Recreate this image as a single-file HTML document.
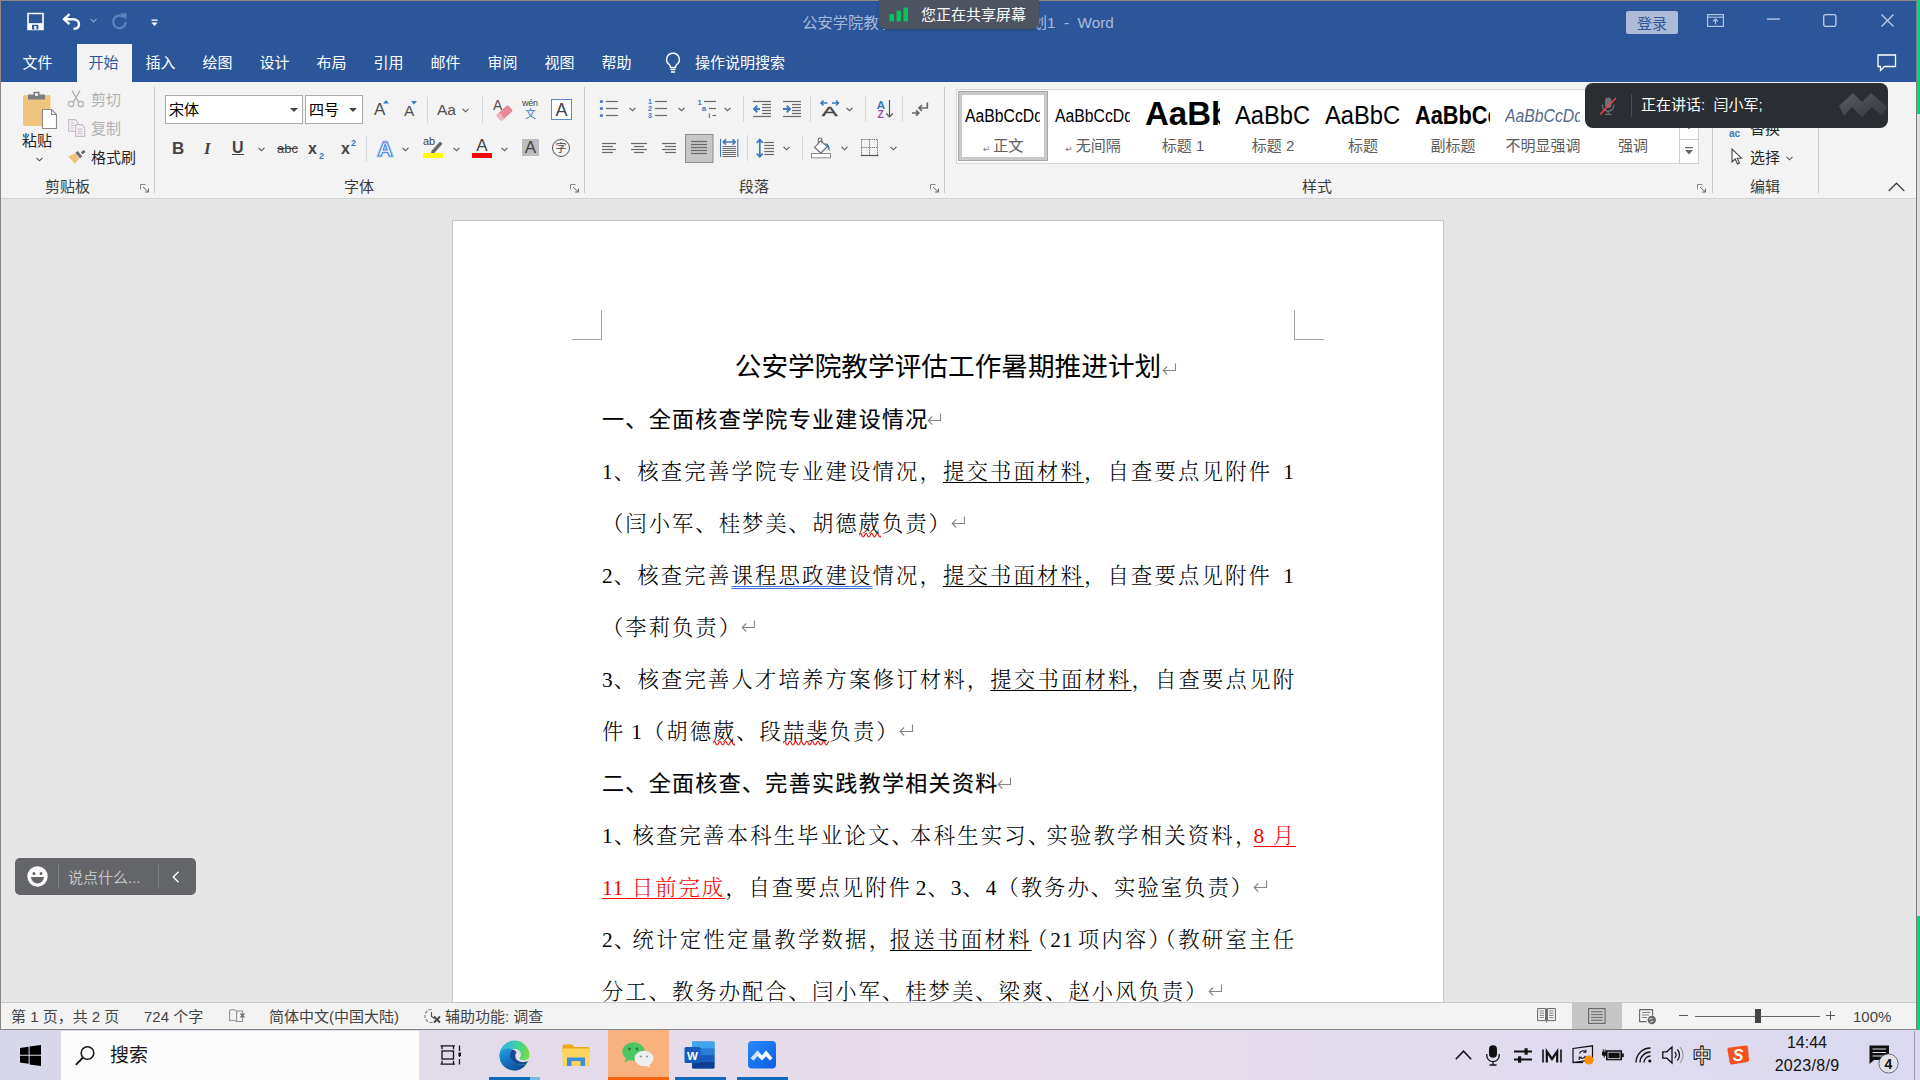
<!DOCTYPE html>
<html lang="zh-CN">
<head>
<meta charset="utf-8">
<title>Word</title>
<style>
*{box-sizing:border-box;margin:0;padding:0}
html,body{width:1920px;height:1080px;overflow:hidden;background:#e6e6e6}
body{position:relative;font-family:"Liberation Sans","Noto Sans CJK SC",sans-serif;font-size:15px;color:#262626}
.abs,.abs-all *{position:absolute}
#win{position:absolute;left:0;top:0;width:1917px;height:1030px;background:#e6e6e6;overflow:hidden}
#titlebar{position:absolute;left:0;top:0;width:1917px;height:82px;background:#2b579a}
#ribbon{position:absolute;left:0;top:82px;width:1917px;height:117px;background:#f3f3f3;border-bottom:1px solid #d2d2d2}
#docarea{position:absolute;left:0;top:199px;width:1917px;height:803px;background:#e6e6e6;overflow:hidden}
#status{position:absolute;left:0;top:1002px;width:1917px;height:28px;background:#f3f3f3;color:#444}
#taskbar{position:absolute;left:0;top:1030px;width:1920px;height:50px;background:linear-gradient(90deg,#d6d7e9 0%,#e2dbea 22%,#e9dcea 50%,#e3dcee 72%,#dad9f0 100%)}
#tbi{position:absolute;left:0;top:1px;width:1920px;height:49px}
.t{position:absolute;white-space:nowrap;line-height:20px;height:20px}
</style>
</head>
<body>
<div id="win">
<div id="titlebar"><style>
#titlebar .tab{position:absolute;top:44px;height:38px;line-height:38px;padding-right:2px;width:57px;text-align:center;color:#fff;font-size:15px}
#titlebar .tab.on{background:#f3f3f3;color:#2b579a;width:55px}
#titlebar svg{position:absolute;overflow:visible}
</style>
<!-- quick access -->
<svg style="left:27px;top:13px" width="17" height="17" viewBox="0 0 17 17"><path d="M1 0.5h15v16h-15z" fill="none" stroke="#fff" stroke-width="1.6"/><rect x="1" y="10.2" width="15" height="6" fill="#fff"/><rect x="5" y="11.8" width="6.4" height="4.7" fill="#2b579a"/><rect x="7.2" y="13" width="2.2" height="3.5" fill="#fff"/></svg>
<svg style="left:62px;top:13px" width="19" height="17" viewBox="0 0 19 17"><path d="M7.5 1.2L2 6.2l5.5 5" fill="none" stroke="#fff" stroke-width="2.4"/><path d="M2.5 6.2h8.5c3.6 0 6 2 6 5s-2.4 4.6-5.5 4.6" fill="none" stroke="#fff" stroke-width="2.4"/></svg>
<svg style="left:90px;top:18px" width="7" height="5" viewBox="0 0 7 5"><path d="M0.5 0.8l3 3 3-3" fill="none" stroke="#8ea6d0" stroke-width="1.2"/></svg>
<svg style="left:111px;top:13px" width="17" height="17" viewBox="0 0 17 17"><path d="M12.800 4.300A6.300 6.300 0 1 0 14.800 9" fill="none" stroke="#5f83bd" stroke-width="2.300"/><path d="M9 0.300h6.500v6.500z" fill="#5f83bd"/></svg>
<svg style="left:151px;top:19px" width="7" height="8" viewBox="0 0 7 8"><rect x="0.5" y="0.5" width="6" height="1.3" fill="#fff"/><path d="M0.3 3.6h6.4L3.5 7z" fill="#fff"/></svg>
<!-- title -->
<div class="t" style="left:658px;width:600px;top:13px;text-align:center;color:#a9b9d8;font-size:15.3px">公安学院教学评估工作暑期推进计划1&nbsp; -&nbsp; Word</div>
<!-- right buttons -->
<div style="position:absolute;left:1626px;top:11px;width:52px;height:23px;background:#acbbd8;border-radius:2px;color:#2b579a;font-size:15px;line-height:25px;text-align:center">登录</div>
<svg style="left:1707px;top:14px" width="17" height="13" viewBox="0 0 17 13"><rect x="0.6" y="0.6" width="15.8" height="11.8" fill="none" stroke="#b4c3de" stroke-width="1.2"/><path d="M0.6 3.2h15.8" stroke="#b4c3de" stroke-width="1.1"/><path d="M8.5 10.5v-5M6 7.5l2.5-2.5 2.5 2.5" fill="none" stroke="#b4c3de" stroke-width="1.2"/></svg>
<svg style="left:1767px;top:18px" width="13" height="2" viewBox="0 0 13 2"><rect width="13" height="1.3" y="0.4" fill="#c3cfe4"/></svg>
<svg style="left:1823px;top:14px" width="14" height="13" viewBox="0 0 14 13"><rect x="0.7" y="0.7" width="12.2" height="11.6" rx="1.8" fill="none" stroke="#c3cfe4" stroke-width="1.3"/></svg>
<svg style="left:1881px;top:14px" width="13" height="13" viewBox="0 0 13 13"><path d="M0.5 0.5l12 12M12.5 0.5l-12 12" stroke="#c3cfe4" stroke-width="1.3"/></svg>
<svg style="left:1877px;top:54px" width="20" height="18" viewBox="0 0 20 18"><path d="M1 1h17.5v11.5h-11l-4 4v-4h-2.5z" fill="none" stroke="#fff" stroke-width="1.3"/></svg>
<!-- tabs -->
<div class="tab" style="left:10px">文件</div>
<div class="tab on" style="left:77px">开始</div>
<div class="tab" style="left:133px">插入</div>
<div class="tab" style="left:190px">绘图</div>
<div class="tab" style="left:247px">设计</div>
<div class="tab" style="left:304px">布局</div>
<div class="tab" style="left:361px">引用</div>
<div class="tab" style="left:418px">邮件</div>
<div class="tab" style="left:475px">审阅</div>
<div class="tab" style="left:532px">视图</div>
<div class="tab" style="left:589px">帮助</div>
<svg style="left:665px;top:52px" width="16" height="22" viewBox="0 0 16 22"><path d="M8 1.2a6.3 6.3 0 0 0-3.6 11.5c0.9 0.8 1.1 1.6 1.1 2.8h5c0-1.2 0.2-2 1.1-2.8A6.3 6.3 0 0 0 8 1.2z" fill="none" stroke="#fff" stroke-width="1.4"/><path d="M5.5 17.5h5M6 20h4" stroke="#fff" stroke-width="1.4"/></svg>
<div class="t" style="left:695px;top:53px;color:#fff;font-size:15px">操作说明搜索</div>
<div style="position:absolute;left:0;top:0;width:1917px;height:1px;background:#8b8782"></div>
</div>
<div id="ribbon"><style>
#ribbon svg{position:absolute;overflow:visible}
#ribbon .t{color:#262626;font-size:15px;margin-top:1px}
#ribbon .gl{position:absolute;top:95px;height:20px;line-height:20px;font-size:15px;color:#3b3b3b;white-space:nowrap;transform:translateX(-50%)}
#ribbon .gs{position:absolute;top:5px;width:1px;height:106px;background:#c8c8c8}
#ribbon .ss{position:absolute;width:1px;height:26px;background:#d4d4d4}
#ribbon .dis{color:#b1b1b1}
.cv{position:absolute;width:7px;height:4px}
</style>
<!-- ===== Clipboard ===== -->
<svg style="left:22px;top:8px" width="36" height="40" viewBox="0 0 36 40">
<rect x="1" y="5" width="27.5" height="31" rx="1.5" fill="#edc57f"/>
<path d="M6 9.5v-5h5.5v-2.8h6v2.8h5.5v5z" fill="#7c7c7c"/><rect x="13" y="3.2" width="3" height="2.6" fill="#f3f3f3"/>
<path d="M20.5 19.5h9l5 5v14h-14z" fill="#fff" stroke="#8a8a8a" stroke-width="1.1"/><path d="M29.5 19.5v5h5" fill="none" stroke="#8a8a8a" stroke-width="1.1"/>
</svg>
<div class="t" style="left:7px;width:60px;text-align:center;top:48px">粘贴</div>
<svg style="left:36px;top:75px" width="7" height="5" viewBox="0 0 7 5"><path d="M0.5 0.8l3 3 3-3" fill="none" stroke="#555" stroke-width="1.1"/></svg>
<svg style="left:67px;top:8px" width="18" height="18" viewBox="0 0 18 18"><path d="M5 0.5l6.5 11.5M13 0.5L6.5 12" stroke="#b3b3b3" stroke-width="1.5" fill="none"/><circle cx="4" cy="14" r="2.7" fill="none" stroke="#b3b3b3" stroke-width="1.3"/><circle cx="13.8" cy="14" r="2.7" fill="none" stroke="#b3b3b3" stroke-width="1.3"/></svg>
<div class="t dis" style="left:91px;top:7px">剪切</div>
<svg style="left:68px;top:37px" width="18" height="18" viewBox="0 0 18 18"><path d="M0.6 0.6h6.5l3 3v8.5h-9.5z" fill="#f6f0f6" stroke="#c9bcc9" stroke-width="1.1"/><path d="M2.5 4h4M2.5 6.5h4M2.5 9h3" stroke="#c9bcc9" stroke-width="1"/><path d="M7.6 5.6h6l3 3v8.8h-9z" fill="#f6f0f6" stroke="#c9bcc9" stroke-width="1.1"/><path d="M9.5 10h5M9.5 12.3h5M9.5 14.6h5" stroke="#c9bcc9" stroke-width="1"/></svg>
<div class="t dis" style="left:91px;top:36px">复制</div>
<svg style="left:68px;top:67px" width="18" height="16" viewBox="0 0 18 16"><path d="M0.3 7.5L7 4.2l4.2 5L7 15z" fill="#edc57f"/><path d="M7.3 3.7l2.5-1.8 4.6 5.6-2.5 1.8z" fill="#6d6d6d"/><path d="M12.8 3.2l3-2.4 1.8 2.2-3 2.4z" fill="#6d6d6d"/></svg>
<div class="t" style="left:91px;top:65px">格式刷</div>
<div class="gl" style="left:67.5px">剪贴板</div>
<svg class="dl" style="left:140px;top:102px" width="10" height="9" viewBox="0 0 10 9"><path d="M0.500 5.500V0.500H5.500" fill="none" stroke="#8a8a8a" stroke-width="1"/><path d="M3 3l5.500 5M8.500 4.500v3.500H5" fill="none" stroke="#6a6a6a" stroke-width="1"/></svg>
<div class="gs" style="left:154px"></div>
<!-- ===== Font group ===== -->
<div style="position:absolute;left:165px;top:13px;width:138px;height:29px;background:#fff;border:1px solid #ababab"></div>
<div class="t" style="left:169px;top:17px;font-size:15px;color:#000">宋体</div>
<svg style="left:290px;top:26px" width="8" height="4" viewBox="0 0 8 4"><path d="M0 0h8L4 4z" fill="#444"/></svg>
<div style="position:absolute;left:305px;top:13px;width:58px;height:29px;background:#fff;border:1px solid #ababab"></div>
<div class="t" style="left:309px;top:17px;font-size:15px;color:#000">四号</div>
<svg style="left:349px;top:26px" width="8" height="4" viewBox="0 0 8 4"><path d="M0 0h8L4 4z" fill="#444"/></svg>
<!-- grow/shrink -->
<div class="t" style="left:374px;top:17px;font-size:17px;color:#505050">A</div>
<svg style="left:383px;top:18px" width="6" height="4" viewBox="0 0 6 4"><path d="M0 3.5L3 0l3 3.5z" fill="#3e78c8"/></svg>
<div class="t" style="left:404px;top:18px;font-size:15.5px;color:#505050">A</div>
<svg style="left:411px;top:19px" width="6" height="4" viewBox="0 0 6 4"><path d="M0 0h6L3 3.5z" fill="#3e78c8"/></svg>
<div class="ss" style="left:427px;top:15px"></div>
<div class="t" style="left:437px;top:17px;font-size:15.5px;color:#505050">Aa</div>
<svg style="left:462px;top:26px" width="7" height="5" viewBox="0 0 7 5"><path d="M0.5 0.8l3 3 3-3" fill="none" stroke="#555" stroke-width="1.1"/></svg>
<div class="ss" style="left:482px;top:15px"></div>
<!-- clear formatting -->
<div class="t" style="left:493px;top:12px;font-size:14px;color:#505050">A</div>
<svg style="left:496px;top:23px" width="17" height="16" viewBox="0 0 17 16"><g transform="rotate(-42 8.500 8)"><rect x="0.500" y="4" width="16" height="8" rx="2" fill="#e8879a"/><rect x="0.500" y="4" width="4.500" height="8" rx="2" fill="#f2b3bf"/></g></svg>
<!-- wen -->
<div class="t" style="left:522px;top:14px;font-size:9px;line-height:12px;height:12px;color:#444;letter-spacing:-0.2px">wén</div>
<div class="t" style="left:525px;top:23px;font-size:11px;line-height:16px;height:16px;color:#3e78c8">文</div>
<!-- A box -->
<div style="position:absolute;left:551px;top:17px;width:21px;height:21px;border:1px solid #5b8bd0;background:#fff"></div>
<div class="t" style="left:551px;width:21px;text-align:center;top:17px;font-size:18px;color:#444">A</div>
<!-- row 2 -->
<div class="t" style="left:172px;top:56px;font-size:17px;font-weight:700;color:#444">B</div>
<div class="t" style="left:204px;top:56px;font-size:17px;font-style:italic;font-weight:700;color:#444;font-family:'Liberation Serif',serif">I</div>
<div class="t" style="left:232px;top:55px;font-size:16px;color:#444;font-weight:700">U</div>
<div style="position:absolute;left:232px;top:72px;width:12px;height:1px;background:#444"></div>
<svg style="left:258px;top:65px" width="7" height="5" viewBox="0 0 7 5"><path d="M0.5 0.8l3 3 3-3" fill="none" stroke="#555" stroke-width="1.1"/></svg>
<div class="t" style="left:277px;top:56px;font-size:13px;color:#444;text-decoration:line-through">abc</div>
<div class="t" style="left:308px;top:56px;font-size:16px;color:#444;font-weight:700">x</div>
<div class="t" style="left:319px;top:63px;font-size:9px;color:#3e78c8;font-weight:700">2</div>
<div class="t" style="left:341px;top:56px;font-size:16px;color:#444;font-weight:700">x</div>
<div class="t" style="left:351px;top:50px;font-size:9px;color:#3e78c8;font-weight:700">2</div>
<div class="ss" style="left:366px;top:54px"></div>
<!-- text effects -->
<svg style="left:375px;top:56px" width="20" height="20" viewBox="0 0 20 20"><text x="10" y="17.500" text-anchor="middle" font-family="Liberation Sans, sans-serif" font-size="21" font-weight="700" fill="none" stroke="#c2daf6" stroke-width="3">A</text><text x="10" y="17.500" text-anchor="middle" font-family="Liberation Sans, sans-serif" font-size="21" font-weight="700" fill="#fff" stroke="#4a86d8" stroke-width="1.100">A</text></svg>
<svg style="left:402px;top:65px" width="7" height="5" viewBox="0 0 7 5"><path d="M0.5 0.8l3 3 3-3" fill="none" stroke="#555" stroke-width="1.1"/></svg>
<!-- highlighter -->
<div class="t" style="left:423px;top:52px;font-size:11px;line-height:12px;height:12px;color:#444">ab</div>
<svg style="left:427px;top:59px" width="16" height="14" viewBox="0 0 16 14"><path d="M13 0.5l2.5 2.2-8.5 9.5-3.2 0.8 0.7-3z" fill="#666"/></svg>
<div style="position:absolute;left:423px;top:71px;width:20px;height:5px;background:#ffff00"></div>
<svg style="left:453px;top:65px" width="7" height="5" viewBox="0 0 7 5"><path d="M0.5 0.8l3 3 3-3" fill="none" stroke="#555" stroke-width="1.1"/></svg>
<!-- font color -->
<div class="t" style="left:472px;width:20px;text-align:center;top:53px;font-size:17px;color:#444">A</div>
<div style="position:absolute;left:472px;top:71px;width:20px;height:5px;background:#ff0000"></div>
<svg style="left:501px;top:65px" width="7" height="5" viewBox="0 0 7 5"><path d="M0.5 0.8l3 3 3-3" fill="none" stroke="#555" stroke-width="1.1"/></svg>
<!-- char shading -->
<div style="position:absolute;left:522px;top:57px;width:17px;height:17px;background:#bdbdbd"></div>
<div class="t" style="left:522px;width:17px;text-align:center;top:55px;font-size:17px;color:#444">A</div>
<!-- enclosed char -->
<div style="position:absolute;left:552px;top:57px;width:18px;height:18px;border:1px solid #555;border-radius:50%"></div>
<div class="t" style="left:552px;width:18px;text-align:center;top:55px;font-size:11px;color:#444">字</div>
<div class="gl" style="left:359px">字体</div>
<svg class="dl" style="left:570px;top:102px" width="10" height="9" viewBox="0 0 10 9"><path d="M0.500 5.500V0.500H5.500" fill="none" stroke="#8a8a8a" stroke-width="1"/><path d="M3 3l5.500 5M8.500 4.500v3.500H5" fill="none" stroke="#6a6a6a" stroke-width="1"/></svg>
<div class="gs" style="left:584px"></div>

<!-- ===== Paragraph group ===== -->
<svg style="left:584px;top:0" width="361" height="117" viewBox="584 82 361 117">
<circle cx="601.4" cy="101.5" r="1.6" fill="#3e78c0"/>
<path d="M606 101.5H618" stroke="#6a6a6a" stroke-width="1.2"/>
<circle cx="601.4" cy="108.5" r="1.6" fill="#3e78c0"/>
<path d="M606 108.5H618" stroke="#6a6a6a" stroke-width="1.2"/>
<circle cx="601.4" cy="115.5" r="1.6" fill="#3e78c0"/>
<path d="M606 115.5H618" stroke="#6a6a6a" stroke-width="1.2"/>
<text x="650" y="104.1" font-family="Liberation Sans,sans-serif" font-weight="700" font-size="7" fill="#3e78c0" text-anchor="middle">1</text>
<path d="M655 101.5H667" stroke="#6a6a6a" stroke-width="1.2"/>
<text x="650" y="111.1" font-family="Liberation Sans,sans-serif" font-weight="700" font-size="7" fill="#3e78c0" text-anchor="middle">2</text>
<path d="M655 108.5H667" stroke="#6a6a6a" stroke-width="1.2"/>
<text x="650" y="118.1" font-family="Liberation Sans,sans-serif" font-weight="700" font-size="7" fill="#3e78c0" text-anchor="middle">3</text>
<path d="M655 115.5H667" stroke="#6a6a6a" stroke-width="1.2"/>
<text x="699.5" y="105" font-family="Liberation Sans,sans-serif" font-weight="700" font-size="7.5" fill="#3e78c0" text-anchor="middle">1</text>
<path d="M704 101.5H716" stroke="#6a6a6a" stroke-width="1.2"/>
<text x="704" y="111.2" font-family="Liberation Sans,sans-serif" font-weight="700" font-size="8" fill="#3e78c0" text-anchor="middle">a</text>
<path d="M709 108.5H716" stroke="#6a6a6a" stroke-width="1.2"/>
<text x="709.3" y="117.6" font-family="Liberation Sans,sans-serif" font-weight="700" font-size="7.5" fill="#3e78c0" text-anchor="middle">i</text>
<path d="M712.5 115.5H716" stroke="#6a6a6a" stroke-width="1.2"/>
<path d="M753 101.5H771" stroke="#6a6a6a" stroke-width="1.2"/>
<path d="M762 104.5H771" stroke="#6a6a6a" stroke-width="1.2"/>
<path d="M762 107.5H771" stroke="#6a6a6a" stroke-width="1.2"/>
<path d="M762 110.5H771" stroke="#6a6a6a" stroke-width="1.2"/>
<path d="M762 113.5H771" stroke="#6a6a6a" stroke-width="1.2"/>
<path d="M753 116.5H771" stroke="#6a6a6a" stroke-width="1.2"/>
<path d="M760 109H754.5M757.3 105.8L754 109l3.3 3.2" fill="none" stroke="#3e78c0" stroke-width="1.9"/>
<path d="M783 101.5H801" stroke="#6a6a6a" stroke-width="1.2"/>
<path d="M792 104.5H801" stroke="#6a6a6a" stroke-width="1.2"/>
<path d="M792 107.5H801" stroke="#6a6a6a" stroke-width="1.2"/>
<path d="M792 110.5H801" stroke="#6a6a6a" stroke-width="1.2"/>
<path d="M792 113.5H801" stroke="#6a6a6a" stroke-width="1.2"/>
<path d="M783 116.5H801" stroke="#6a6a6a" stroke-width="1.2"/>
<path d="M783 109H789.5M786.7 105.8L790 109l-3.3 3.2" fill="none" stroke="#3e78c0" stroke-width="1.9"/>
<path d="M821 103h6.5M823.5 100.5L821 103l2.5 2.5M838.5 103H832M836 100.5l2.5 2.5-2.5 2.5" fill="none" stroke="#3e78c0" stroke-width="1.5"/>
<text x="829.6" y="116" font-family="Liberation Sans,sans-serif" font-size="13.5" fill="#444" stroke="#444" stroke-width="0.35" text-anchor="middle" transform="translate(829.6 0) scale(1.75 1) translate(-829.6 0)">A</text>
<text x="880.8" y="108.6" font-family="Liberation Sans,sans-serif" font-size="11.5" font-weight="700" fill="#3e78c0" text-anchor="middle">A</text>
<text x="880.6" y="118" font-family="Liberation Sans,sans-serif" font-size="10.5" font-weight="700" fill="#9a4fb0" text-anchor="middle">Z</text>
<path d="M889.5 100v17M886.2 113.5l3.3 3.5 3.3-3.5" fill="none" stroke="#555" stroke-width="1.2"/>
<path d="M927.3 102.5v5.5h-8M922 105l-3 3 3 3" fill="none" stroke="#666" stroke-width="1.7"/>
<path d="M912 113h6.5M916 110.3l2.8 2.7-2.8 2.7" fill="none" stroke="#666" stroke-width="1.7"/>
<path d="M602 143.5H616" stroke="#6a6a6a" stroke-width="1.2"/>
<path d="M631 143.5H647" stroke="#6a6a6a" stroke-width="1.2"/>
<path d="M662 143.5H676" stroke="#6a6a6a" stroke-width="1.2"/>
<path d="M602 146.5H613" stroke="#6a6a6a" stroke-width="1.2"/>
<path d="M634 146.5H644" stroke="#6a6a6a" stroke-width="1.2"/>
<path d="M665 146.5H676" stroke="#6a6a6a" stroke-width="1.2"/>
<path d="M602 149.5H616" stroke="#6a6a6a" stroke-width="1.2"/>
<path d="M631 149.5H647" stroke="#6a6a6a" stroke-width="1.2"/>
<path d="M662 149.5H676" stroke="#6a6a6a" stroke-width="1.2"/>
<path d="M602 152.5H613" stroke="#6a6a6a" stroke-width="1.2"/>
<path d="M634 152.5H644" stroke="#6a6a6a" stroke-width="1.2"/>
<path d="M665 152.5H676" stroke="#6a6a6a" stroke-width="1.2"/>
<rect x="685.5" y="134.5" width="27.5" height="28" fill="#c6c6c6" stroke="#8e8e8e" stroke-width="1"/>
<path d="M691 141.5H707" stroke="#6a6a6a" stroke-width="1.2"/>
<path d="M691 144.5H707" stroke="#6a6a6a" stroke-width="1.2"/>
<path d="M691 147.5H707" stroke="#6a6a6a" stroke-width="1.2"/>
<path d="M691 150.5H707" stroke="#6a6a6a" stroke-width="1.2"/>
<path d="M691 153.5H707" stroke="#6a6a6a" stroke-width="1.2"/>
<path d="M720.5 139v18M737.8 139v18" stroke="#3e78c0" stroke-width="1.1"/>
<path d="M723.5 142h11.5M726 139.3l-2.8 2.7 2.8 2.7M732.5 139.3l2.8 2.7-2.8 2.7" fill="none" stroke="#3e78c0" stroke-width="1.6"/>
<path d="M722.5 146.5H736" stroke="#6a6a6a" stroke-width="1.05"/>
<path d="M722.5 148.5H736" stroke="#6a6a6a" stroke-width="1.05"/>
<path d="M722.5 150.5H736" stroke="#6a6a6a" stroke-width="1.05"/>
<path d="M722.5 152.5H736" stroke="#6a6a6a" stroke-width="1.05"/>
<path d="M722.5 154.5H736" stroke="#6a6a6a" stroke-width="1.05"/>
<path d="M722.5 156.5H736" stroke="#6a6a6a" stroke-width="1.05"/>
<path d="M759.8 140v16.5M756.8 142.8l3-3.2 3 3.2M756.8 153.6l3 3.2 3-3.2" fill="none" stroke="#3e78c0" stroke-width="1.7"/>
<path d="M764.3 142.5H774" stroke="#6a6a6a" stroke-width="1.2"/>
<path d="M764.3 145.5H774" stroke="#6a6a6a" stroke-width="1.2"/>
<path d="M764.3 148.5H774" stroke="#6a6a6a" stroke-width="1.2"/>
<path d="M764.3 151.5H774" stroke="#6a6a6a" stroke-width="1.2"/>
<path d="M764.3 154.5H774" stroke="#6a6a6a" stroke-width="1.2"/>
<rect x="811.5" y="153.5" width="19" height="4.3" fill="#fff" stroke="#8a8a8a" stroke-width="1"/>
<path d="M814.5 147.5l6.3-6.8 6.4 6-6.3 6.3z" fill="#fff" stroke="#666" stroke-width="1.1"/>
<path d="M818.3 143v-3.2a1.8 1.8 0 0 1 3.6 0v3.8" fill="none" stroke="#666" stroke-width="1.1"/>
<path d="M825 143.2c3 0 5.2 2.5 4.6 8.3-1.2-2.5-2-3.5-2.4-4.8z" fill="#3e78c0"/>
<path d="M861.5 139.5h16.5M861.5 147.5h16.5M861.5 139.5v16M869.5 139.5v16M877.5 139.5v16" fill="none" stroke="#555" stroke-width="1" stroke-dasharray="1 1.05"/>
<path d="M861 155.5h17.5" stroke="#555" stroke-width="1.2"/>
</svg>
<svg style="left:629px;top:25px" width="7" height="5" viewBox="0 0 7 5"><path d="M0.5 0.8l3 3 3-3" fill="none" stroke="#555" stroke-width="1.1"/></svg>
<svg style="left:678px;top:25px" width="7" height="5" viewBox="0 0 7 5"><path d="M0.5 0.8l3 3 3-3" fill="none" stroke="#555" stroke-width="1.1"/></svg>
<svg style="left:724px;top:25px" width="7" height="5" viewBox="0 0 7 5"><path d="M0.5 0.8l3 3 3-3" fill="none" stroke="#555" stroke-width="1.1"/></svg>
<svg style="left:846px;top:25px" width="7" height="5" viewBox="0 0 7 5"><path d="M0.5 0.8l3 3 3-3" fill="none" stroke="#555" stroke-width="1.1"/></svg>
<svg style="left:783px;top:64px" width="7" height="5" viewBox="0 0 7 5"><path d="M0.5 0.8l3 3 3-3" fill="none" stroke="#555" stroke-width="1.1"/></svg>
<svg style="left:841px;top:64px" width="7" height="5" viewBox="0 0 7 5"><path d="M0.5 0.8l3 3 3-3" fill="none" stroke="#555" stroke-width="1.1"/></svg>
<svg style="left:890px;top:64px" width="7" height="5" viewBox="0 0 7 5"><path d="M0.5 0.8l3 3 3-3" fill="none" stroke="#555" stroke-width="1.1"/></svg>
<div class="ss" style="left:743px;top:14px"></div>
<div class="ss" style="left:810px;top:14px"></div>
<div class="ss" style="left:865px;top:14px"></div>
<div class="ss" style="left:902px;top:14px"></div>
<div class="ss" style="left:747px;top:53px"></div>
<div class="ss" style="left:802px;top:53px"></div>
<div class="gl" style="left:754px">段落</div>
<svg class="dl" style="left:930px;top:102px" width="10" height="9" viewBox="0 0 10 9"><path d="M0.500 5.500V0.500H5.500" fill="none" stroke="#8a8a8a" stroke-width="1"/><path d="M3 3l5.500 5M8.500 4.500v3.500H5" fill="none" stroke="#6a6a6a" stroke-width="1"/></svg>
<div class="gs" style="left:944px"></div>

<!-- ===== Styles ===== -->
<style>
#gal{position:absolute;left:956px;top:7px;width:743px;height:75px;background:#fff;border:1px solid #d6d6d6}
#gal .it{position:absolute;top:0;width:90px;height:73px}
#gal .pv{position:absolute;left:7px;width:75px;height:44px;top:3px;overflow:hidden;white-space:nowrap;color:#000;font-family:"Liberation Sans",sans-serif}
#gal .pv span{position:absolute;left:0;bottom:9px;line-height:1;transform-origin:0 100%}
#gal .lb{position:absolute;left:0;width:90px;top:46px;height:20px;line-height:20px;text-align:center;font-size:15px;color:#5c5c5c;white-space:nowrap}
#gal .pmk{font-family:"DejaVu Sans",sans-serif;font-size:9px;color:#777;margin-right:3px;position:relative;top:1px}
</style>
<div id="gal">
<div style="position:absolute;left:1px;top:1px;width:90px;height:70px;border:1px solid #a8a8a8;box-shadow:inset 0 0 0 3px #c9c9c9"></div>
<div class="it" style="left:1px"><div class="pv"><span style="font-size:17.5px;transform:scaleX(.9);bottom:12px">AaBbCcDd</span></div><div class="lb"><span class="pmk">↵</span>正文</div></div>
<div class="it" style="left:91px"><div class="pv"><span style="font-size:17.5px;transform:scaleX(.9);bottom:12px">AaBbCcDd</span></div><div class="lb"><span class="pmk">↵</span>无间隔</div></div>
<div class="it" style="left:181px"><div class="pv"><span style="font-size:33px;font-weight:700;transform:scaleX(1);bottom:7px">AaBb</span></div><div class="lb">标题 1</div></div>
<div class="it" style="left:271px"><div class="pv"><span style="font-size:25.5px;transform:scaleX(.93);bottom:9px">AaBbCc</span></div><div class="lb">标题 2</div></div>
<div class="it" style="left:361px"><div class="pv"><span style="font-size:25.5px;transform:scaleX(.93);bottom:9px">AaBbCc</span></div><div class="lb">标题</div></div>
<div class="it" style="left:451px"><div class="pv"><span style="font-size:25px;font-weight:700;transform:scaleX(.87);bottom:9px">AaBbCc</span></div><div class="lb">副标题</div></div>
<div class="it" style="left:541px"><div class="pv"><span style="font-size:17.5px;font-style:italic;color:#5a6a88;transform:scaleX(.9);bottom:12px">AaBbCcDd</span></div><div class="lb">不明显强调</div></div>
<div class="it" style="left:631px"><div class="pv"><span style="font-size:17.5px;font-style:italic;color:#000;transform:scaleX(.9);bottom:12px">AaBbCcDd</span></div><div class="lb">强调</div></div>
<div style="position:absolute;left:722px;top:-1px;width:20px;height:75px;border:1px solid #d0d0d0;background:#fff"></div>
<div style="position:absolute;left:722px;top:24px;width:20px;height:1px;background:#d0d0d0"></div>
<div style="position:absolute;left:722px;top:49px;width:20px;height:1px;background:#d0d0d0"></div>
<svg style="left:728px;top:10px" width="8" height="5" viewBox="0 0 8 5"><path d="M0 5L4 0.5 8 5z" fill="#777"/></svg>
<svg style="left:728px;top:35px" width="8" height="5" viewBox="0 0 8 5"><path d="M0 0h8L4 4.5z" fill="#777"/></svg>
<svg style="left:728px;top:57px" width="8" height="8" viewBox="0 0 8 8"><path d="M0 0.6h8" stroke="#666" stroke-width="1.2"/><path d="M0 3h8L4 7.5z" fill="#666"/></svg>
</div>
<div class="gl" style="left:1317px">样式</div>
<svg class="dl" style="left:1697px;top:102px" width="10" height="9" viewBox="0 0 10 9"><path d="M0.500 5.500V0.500H5.500" fill="none" stroke="#8a8a8a" stroke-width="1"/><path d="M3 3l5.500 5M8.500 4.500v3.500H5" fill="none" stroke="#6a6a6a" stroke-width="1"/></svg>
<div class="gs" style="left:1712px"></div>

<!-- ===== Editing ===== -->
<div class="t" style="left:1750px;top:8px">查找</div>
<div class="t" style="left:1750px;top:36px">替换</div>
<div class="t" style="left:1729px;top:41px;font-size:10px;color:#3e78c0;font-weight:700">ac</div>
<svg style="left:1731px;top:66px" width="12" height="17" viewBox="0 0 12 17"><path d="M1 1v13l3.2-3 2.3 5 2-0.9-2.3-4.9H10.500z" fill="#fff" stroke="#444" stroke-width="1.1"/></svg>
<div class="t" style="left:1750px;top:65px">选择</div>
<svg style="left:1786px;top:74px" width="7" height="5" viewBox="0 0 7 5"><path d="M0.5 0.8l3 3 3-3" fill="none" stroke="#555" stroke-width="1.1"/></svg>
<div class="gl" style="left:1765px">编辑</div>
<div class="gs" style="left:1818px"></div>
<svg style="left:1888px;top:100px" width="17" height="10" viewBox="0 0 17 10"><path d="M0.7 9l7.8-7.8L16.300 9" fill="none" stroke="#444" stroke-width="1.3"/></svg>

</div>
<div id="docarea"><div id="page"><style>
#page{position:absolute;left:452px;top:21px;width:992px;height:900px;background:#fff;border:1px solid #c6c6c6}
.crop{position:absolute;border:0 solid #a6a6a6;width:30px;height:30px}
.ln{position:absolute;left:149px;width:692px;height:52px;line-height:52px;font-size:21.3px;letter-spacing:2.03px;white-space:nowrap;color:#000;font-family:"Liberation Serif","Noto Serif CJK SC",serif;font-weight:300}
.ln.j{text-align:justify;text-align-last:justify;width:694px}
.ln.b{margin-top:1px}
.ln.h{font-family:"Liberation Sans","Noto Sans CJK SC",sans-serif;font-weight:400;-webkit-text-stroke:0.15px #000;font-size:22px;letter-spacing:1.33px;margin-top:1px}
.ln.tt{font-family:"Liberation Sans","Noto Sans CJK SC",sans-serif;font-weight:400;font-size:26.67px;letter-spacing:0;text-align:center}
.pm{display:inline-block;vertical-align:middle;margin-left:-1px;position:relative;top:-4px;overflow:visible}
.h .pm{top:-2px;margin-left:-2px}
.u{text-decoration:underline;text-decoration-thickness:1px;text-underline-offset:3px}
.wv{position:relative}
.wvs{position:absolute;left:0;bottom:-2px;overflow:hidden}
.bl{text-decoration:underline double #3a6fd8;text-decoration-thickness:1px;text-underline-offset:3px;text-decoration-skip-ink:none}
.rd{color:#ff0000;text-decoration:underline;text-decoration-thickness:1px;text-underline-offset:3px}
.as{padding-left:4px}
.d{letter-spacing:1px}
.sp{display:inline-block;width:11.2px}
.pc{margin-right:-5px}
.pl{margin-left:-5px}
</style>
<div class="crop" style="left:119px;top:89px;border-right-width:1px;border-bottom-width:1px"></div>
<div class="crop" style="left:841px;top:89px;border-left-width:1px;border-bottom-width:1px"></div>
<div class="ln tt" style="top:120px">公安学院教学评估工作暑期推进计划<svg class="pm" style="position:absolute;top:22px;margin-left:1px" width="15" height="13" viewBox="0 0 15 13"><path d="M13.500 0.500v7H1.200M5.200 3.500L1.200 7.500l4 4" fill="none" stroke="#858585" stroke-width="1.100"/></svg></div>
<div class="ln h" style="top:172px">一、全面核查学院专业建设情况<svg class="pm" width="15" height="13" viewBox="0 0 15 13"><path d="M13.500 0.500v7H1.200M5.200 3.500L1.200 7.500l4 4" fill="none" stroke="#858585" stroke-width="1.100"/></svg></div>
<div class="ln b j" style="top:224px;width:693px"><span class="d">1</span>、核查完善学院专业建设情况，<span class="u">提交书面材料</span>，自查要点见附件<span class="sp"></span><span class="d">1</span></div>
<div class="ln b" style="top:276px">（闫小军、桂梦美、胡德<span class="wv">葳<svg class="wvs" width="22.3" height="6" viewBox="0 0 22.3 6"><path d="M0 3.200 q1.400 -3.600 2.800 0 q1.400 3.600 2.800 0 q1.400 -3.600 2.800 0 q1.400 3.600 2.800 0 q1.400 -3.600 2.800 0 q1.400 3.600 2.800 0 q1.400 -3.600 2.800 0 q1.400 3.600 2.800 0 q1.400 -3.600 2.800 0 q1.400 3.600 2.800 0 q1.400 -3.600 2.800 0" fill="none" stroke="#f01414" stroke-width="1.100"/></svg></span>负责）<svg class="pm" width="15" height="13" viewBox="0 0 15 13"><path d="M13.500 0.500v7H1.200M5.200 3.500L1.200 7.500l4 4" fill="none" stroke="#858585" stroke-width="1.100"/></svg></div>
<div class="ln b j" style="top:328px;width:693px"><span class="d">2</span>、核查完善<span class="bl">课程思政建设</span>情况，<span class="u">提交书面材料</span>，自查要点见附件<span class="sp"></span><span class="d">1</span></div>
<div class="ln b" style="top:380px">（李莉负责）<svg class="pm" width="15" height="13" viewBox="0 0 15 13"><path d="M13.500 0.500v7H1.200M5.200 3.500L1.200 7.500l4 4" fill="none" stroke="#858585" stroke-width="1.100"/></svg></div>
<div class="ln b j" style="top:432px"><span class="d">3</span>、核查完善人才培养方案修订材料，<span class="u">提交书面材料</span>，自查要点见附</div>
<div class="ln b" style="top:484px">件<span class="as" style="padding-left:6px"><span class="d">1</span></span>（胡德<span class="wv">葳<svg class="wvs" width="22.3" height="6" viewBox="0 0 22.3 6"><path d="M0 3.200 q1.400 -3.600 2.800 0 q1.400 3.600 2.800 0 q1.400 -3.600 2.800 0 q1.400 3.600 2.800 0 q1.400 -3.600 2.800 0 q1.400 3.600 2.800 0 q1.400 -3.600 2.800 0 q1.400 3.600 2.800 0 q1.400 -3.600 2.800 0 q1.400 3.600 2.800 0 q1.400 -3.600 2.800 0" fill="none" stroke="#f01414" stroke-width="1.100"/></svg></span>、段<span class="wv">喆斐<svg class="wvs" width="45.7" height="6" viewBox="0 0 45.7 6"><path d="M0 3.200 q1.400 -3.600 2.800 0 q1.400 3.600 2.800 0 q1.400 -3.600 2.800 0 q1.400 3.600 2.800 0 q1.400 -3.600 2.800 0 q1.400 3.600 2.800 0 q1.400 -3.600 2.800 0 q1.400 3.600 2.800 0 q1.400 -3.600 2.800 0 q1.400 3.600 2.800 0 q1.400 -3.600 2.800 0 q1.400 3.600 2.800 0 q1.400 -3.600 2.800 0 q1.400 3.600 2.800 0 q1.400 -3.600 2.800 0 q1.400 3.600 2.800 0 q1.400 -3.600 2.800 0 q1.400 3.600 2.800 0 q1.400 -3.600 2.800 0 q1.400 3.600 2.800 0 q1.400 -3.600 2.800 0 q1.400 3.600 2.800 0" fill="none" stroke="#f01414" stroke-width="1.100"/></svg></span>负责）<svg class="pm" width="15" height="13" viewBox="0 0 15 13"><path d="M13.500 0.500v7H1.200M5.200 3.500L1.200 7.500l4 4" fill="none" stroke="#858585" stroke-width="1.100"/></svg></div>
<div class="ln h" style="top:536px">二、全面核查、完善实践教学相关资料<svg class="pm" width="15" height="13" viewBox="0 0 15 13"><path d="M13.500 0.500v7H1.200M5.200 3.500L1.200 7.500l4 4" fill="none" stroke="#858585" stroke-width="1.100"/></svg></div>
<div class="ln b j" style="top:588px"><span class="d">1</span><span class="pc">、</span>核查完善本科生毕业论文<span class="pc">、</span>本科生实习<span class="pc">、</span>实验教学相关资料<span class="pc">，</span><span class="rd"><span class="d">8</span> 月</span></div>
<div class="ln b" style="top:640px"><span class="rd"><span class="d">11</span> 日前完成</span>，自查要点见附件<span class="as"><span class="d">2</span></span>、<span class="d">3</span>、<span class="d">4</span>（教务办、实验室负责）<svg class="pm" width="15" height="13" viewBox="0 0 15 13"><path d="M13.500 0.500v7H1.200M5.200 3.500L1.200 7.500l4 4" fill="none" stroke="#858585" stroke-width="1.100"/></svg></div>
<div class="ln b j" style="top:692px"><span class="d">2</span><span class="pc">、</span>统计定性定量教学数据<span class="pc" style="margin-right:-2.5px">，</span><span class="u">报送书面材料</span><span class="pl">（</span><span class="d">21</span><span class="as">项</span>内容<span class="pc" style="margin-right:-7px">）</span>（教研室主任</div>
<div class="ln b" style="top:744px">分工、教务办配合、闫小军、桂梦美、梁爽、赵小风负责）<svg class="pm" width="15" height="13" viewBox="0 0 15 13"><path d="M13.500 0.500v7H1.200M5.200 3.500L1.200 7.500l4 4" fill="none" stroke="#858585" stroke-width="1.100"/></svg></div>
</div></div>
<div id="status"><style>
#status .t{top:5px;font-size:15px;color:#444}
#status svg{position:absolute;overflow:visible}
</style>
<div style="position:absolute;left:0;top:0;width:1917px;height:1px;background:#c8c8c8"></div>
<div class="t" style="left:11px">第 1 页，共 2 页</div>
<div class="t" style="left:144px">724 个字</div>
<svg style="left:229px;top:7px" width="19" height="14" viewBox="0 0 19 14"><path d="M0.600 1.200c2.500-0.800 5-0.600 7 0.800v10.500c-2-1.200-4.500-1.400-7-0.700z" fill="none" stroke="#8a8a8a" stroke-width="1"/><path d="M7.600 2h6v10.500h-6" fill="none" stroke="#8a8a8a" stroke-width="1"/><path d="M11.500 4.500l4 4M15.500 4.500l-4 4" stroke="#666" stroke-width="1.100"/></svg>
<div class="t" style="left:269px">简体中文(中国大陆)</div>
<svg style="left:423px;top:6px" width="20" height="17" viewBox="0 0 20 17"><path d="M8.500 1.500a6.500 6.500 0 1 0 3 12.200" fill="none" stroke="#777" stroke-width="1.100" stroke-dasharray="3 1.600"/><path d="M8.500 4v4.500l3 2" fill="none" stroke="#555" stroke-width="1.200"/><path d="M11 8.500l6 6M17 8.500l-6 6" stroke="#444" stroke-width="1.800"/></svg>
<div class="t" style="left:445px">辅助功能: 调查</div>
<!-- view buttons -->
<svg style="left:1537px;top:6px" width="19" height="15" viewBox="0 0 19 15"><path d="M0.600 0.600h8v12h-8zM10.400 0.600h8v12h-8z" fill="none" stroke="#666" stroke-width="1"/><path d="M2.500 3h4.500M2.500 5.200h4.500M2.500 7.400h4.500M2.500 9.600h4.500M12 3h4.500M12 5.200h4.500M12 7.400h4.500M12 9.600h4.500" stroke="#777" stroke-width="0.900"/><path d="M9.500 0.500v14" stroke="#666" stroke-width="1"/></svg>
<div style="position:absolute;left:1572px;top:1px;width:50px;height:27px;background:#c6c6c6"></div>
<svg style="left:1588px;top:6px" width="18" height="16" viewBox="0 0 18 16"><rect x="0.600" y="0.600" width="16.500" height="14.800" fill="none" stroke="#666" stroke-width="1.100"/><path d="M3 3.800h11.500M3 6.600h11.500M3 9.400h11.500M3 12.200h11.500" stroke="#666" stroke-width="1"/></svg>
<svg style="left:1639px;top:7px" width="18" height="16" viewBox="0 0 18 16"><path d="M0.600 0.600h13v6M0.600 0.600v12h7" fill="none" stroke="#666" stroke-width="1.100"/><path d="M3 3.500h8.500M3 6h7M3 8.500h5" stroke="#777" stroke-width="0.900"/><circle cx="12.800" cy="11" r="4.200" fill="#666"/><path d="M10 10c1.500-1 2.500 0.500 3.500-0.500M11 13.500c1-1.500 2.500-1 3.500-1.500" stroke="#f3f3f3" stroke-width="0.900" fill="none"/></svg>
<div style="position:absolute;left:1679px;top:13px;width:9px;height:1px;background:#555"></div>
<div style="position:absolute;left:1695px;top:14px;width:125px;height:1px;background:#666"></div>
<div style="position:absolute;left:1755px;top:7px;width:6px;height:14px;background:#444"></div>
<div style="position:absolute;left:1826px;top:13px;width:9px;height:1px;background:#555"></div>
<div style="position:absolute;left:1830px;top:9px;width:1px;height:9px;background:#555"></div>
<div class="t" style="left:1853px">100%</div>
<div style="position:absolute;left:0;top:27px;width:1917px;height:1px;background:#858585"></div>
</div>
</div>
<div id="taskbar"><div id="tbi"><style>
#tbi svg{position:absolute;overflow:visible}
#tbi .ul{position:absolute;top:46px;height:3px;background:#0f6cbd}
</style>
<!-- start -->
<svg style="left:20px;top:14px" width="21" height="21" viewBox="0 0 21 21"><path d="M0 3l8.600-1.200v8H0zM9.600 1.600L21 0v9.800H9.600zM0 10.800h8.600v8L0 17.600zM9.600 10.800H21V21L9.600 19.400z" fill="#000"/></svg>
<div style="position:absolute;left:61px;top:0;width:358px;height:49px;background:#fcfcfc"></div>
<svg style="left:75px;top:14px" width="21" height="21" viewBox="0 0 21 21"><circle cx="12.500" cy="8" r="6.300" fill="none" stroke="#1a1a1a" stroke-width="1.600"/><path d="M8 12.500L0.800 19.800" stroke="#1a1a1a" stroke-width="1.800"/></svg>
<div class="t" style="left:110px;top:12px;font-size:19px;line-height:26px;height:26px;color:#1a1a1a">搜索</div>
<!-- task view -->
<svg style="left:440px;top:14px" width="21" height="20" viewBox="0 0 21 20"><path d="M0.500 0.800h14.500M0.500 19.200h14.500M2 0.800v3.500M13.500 0.800v3.500M2 19.200v-3.500M13.500 19.200v-3.500" fill="none" stroke="#111" stroke-width="1.300"/><rect x="2" y="6" width="11.500" height="8" fill="none" stroke="#111" stroke-width="1.300"/><path d="M19.500 0.500v5.500M19.500 8v4M19.500 14v5.500" stroke="#111" stroke-width="1.300"/><rect x="18.500" y="7.500" width="2.500" height="3.500" fill="#111"/></svg>
<!-- edge -->
<svg style="left:499px;top:9px" width="31" height="31" viewBox="0 0 31 31">
<defs><linearGradient id="eg1" x1="0" y1="0.300" x2="1" y2="0.500"><stop offset="0" stop-color="#2fb4ee"/><stop offset="0.550" stop-color="#3fd0a0"/><stop offset="1" stop-color="#7fdc3a"/></linearGradient>
<linearGradient id="eg2" x1="0" y1="0" x2="0.600" y2="1"><stop offset="0" stop-color="#1fa3e6"/><stop offset="1" stop-color="#0f4c9c"/></linearGradient></defs>
<circle cx="15.500" cy="15.500" r="15" fill="url(#eg1)"/>
<path d="M13 9.500C17.500 8 22 10.500 22 14.500c0 1.800-1.300 2.800-1.300 3.700 0 1.300 1.800 2 4 2 2.800 0 5-1.500 5.800-3.200v-1.500l0.500 0c0 3.500-1.500 6.500-4 8.500-5 1.500-11 0.500-14-3-3-3.500-2.500-8.500 0-11.500z" fill="#e7dcea"/>
<path d="M0.500 15.500C0.500 9.500 8 7 13 9.500c-2.500 3-3 8 0 11.500 3 3.500 9 4.500 14 3-2.500 4-6.500 6.500-11.500 6.500-8.500 0-15-6.500-15-15z" fill="url(#eg2)"/>
<path d="M13 9.500c-2.500 3-3 8 0 11.500 3 3.500 9 4.500 14 3 0.800-1 1.500-2 2-3-2.500 1.200-6.500 1.800-9.500 0-3.500-2-4-6-2-8.800-1-1.500-3-2.500-4.500-2.700z" fill="#124a96"/>
</svg>
<div class="ul" style="left:489px;width:41px"></div><div class="ul" style="left:530px;width:10px;background:#7ab8ea"></div>
<!-- explorer -->
<svg style="left:562px;top:12px" width="28" height="24" viewBox="0 0 28 24"><path d="M0.500 3a1.500 1.500 0 0 1 1.500-1.500h8l2.500 2.500H26a1.500 1.500 0 0 1 1.500 1.500V9H0.500z" fill="#e9a915"/><rect x="0.500" y="5.500" width="27" height="17.500" rx="1.200" fill="#fbd55b"/><path d="M5 23v-8.500h18V23h-4.500v-5h-9v5z" fill="#3b8ee0"/></svg>
<!-- wechat -->
<div style="position:absolute;left:608px;top:-1px;width:61px;height:50px;background:#f9b17e"></div>
<div style="position:absolute;left:608px;top:46px;width:61px;height:3px;background:#f7630c"></div>
<svg style="left:622px;top:11px" width="32" height="26" viewBox="0 0 32 26"><ellipse cx="11.500" cy="9.500" rx="11.200" ry="9.200" fill="#4cc764"/><path d="M4 16l-1.500 4.500 5-2.500z" fill="#4cc764"/><circle cx="7.500" cy="7" r="1.400" fill="#2c7a3c"/><circle cx="15" cy="7" r="1.400" fill="#2c7a3c"/><ellipse cx="22" cy="16.500" rx="9.500" ry="7.800" fill="#eeeeee"/><path d="M27 22.500l1.500 3.300-4.500-1.800z" fill="#eeeeee"/><circle cx="18.800" cy="14.500" r="1.100" fill="#9a9a9a"/><circle cx="25" cy="14.500" r="1.100" fill="#9a9a9a"/></svg>
<!-- word -->
<svg style="left:684px;top:10px" width="31" height="28" viewBox="0 0 31 28"><rect x="8" y="0.500" width="22.500" height="27" rx="1.500" fill="#2b7cd3"/><rect x="8" y="0.500" width="22.500" height="7" fill="#41a5ee"/><rect x="8" y="7.500" width="22.500" height="6.700" fill="#2b7cd3"/><rect x="8" y="14.200" width="22.500" height="6.700" fill="#185abd"/><path d="M8 20.900h22.500v5.100a1.500 1.500 0 0 1-1.500 1.500H9.500A1.500 1.500 0 0 1 8 26z" fill="#103f91"/><rect x="0.500" y="6" width="16" height="16" rx="1.500" fill="#185abd"/><text x="8.500" y="18.500" text-anchor="middle" font-family="Liberation Sans,sans-serif" font-weight="700" font-size="11.500" fill="#fff">W</text></svg>
<div class="ul" style="left:675px;width:51px"></div>
<!-- tencent meeting -->
<svg style="left:748px;top:10px" width="28" height="28" viewBox="0 0 28 28"><defs><linearGradient id="tm" x1="0" y1="0" x2="1" y2="1"><stop offset="0" stop-color="#2a8af6"/><stop offset="1" stop-color="#0a5ee8"/></linearGradient></defs><rect x="0" y="0" width="28" height="27.500" rx="4" fill="url(#tm)"/><path d="M3 17l6.500-7.500 4.500 5 4-5L24.500 17l-2.500 2.500-4-4.200-4 4.200-4.500-4.500-4 4.500z" fill="#fff"/><path d="M3 17l6.500-7.500 2.200 2.500-6.200 7.500z" fill="#cfe2ff"/></svg>
<div class="ul" style="left:737px;width:51px"></div>
<!-- tray -->
<svg style="left:1455px;top:19px" width="17" height="10" viewBox="0 0 17 10"><path d="M0.800 9.200L8.500 1.200l7.700 8" fill="none" stroke="#111" stroke-width="1.500"/></svg>
<svg style="left:1486px;top:14px" width="14" height="21" viewBox="0 0 14 21"><rect x="3" y="0.300" width="8" height="12.500" rx="4" fill="#111"/><path d="M0.800 9v1.500a6.200 6.200 0 0 0 12.400 0V9M7 16.800v3M3.500 20h7" fill="none" stroke="#111" stroke-width="1.300"/></svg>
<svg style="left:1514px;top:17px" width="18" height="15" viewBox="0 0 18 15"><path d="M0 3.500h18M0 11.500h18" stroke="#111" stroke-width="2.200"/><rect x="10.500" y="0.300" width="3.200" height="6.400" fill="#111"/><rect x="4" y="8.300" width="3.200" height="6.400" fill="#111"/></svg>
<svg style="left:1542px;top:18px" width="20" height="14" viewBox="0 0 20 14"><path d="M1 0.500v13M19 0.500v13" stroke="#111" stroke-width="1.600"/><path d="M4.800 13.500V2.500l5.200 7.500 5.200-7.500v11" fill="none" stroke="#111" stroke-width="2.200"/></svg>
<svg style="left:1572px;top:14px" width="22" height="20" viewBox="0 0 22 20"><path d="M1 3.500L20.500 0.800v14L1 17.500z" fill="none" stroke="#111" stroke-width="1.200"/><path d="M1 17.500h10" stroke="#111" stroke-width="1.200"/><path d="M7.500 8.500a3.500 3.500 0 0 1 6-1.500M13.500 11a3.500 3.500 0 0 1-6 1" fill="none" stroke="#111" stroke-width="1.100"/><path d="M13.800 4.800v2.500h-2.500M7.200 14.700v-2.500h2.500" fill="none" stroke="#111" stroke-width="1.100"/><circle cx="17" cy="15" r="4.600" fill="#ff8c00"/></svg>
<svg style="left:1602px;top:18px" width="22" height="12" viewBox="0 0 22 12"><rect x="4.500" y="1.800" width="15" height="9" fill="#111" stroke="#111" stroke-width="1"/><rect x="6" y="3.200" width="12" height="6.200" fill="none" stroke="#dcdaee" stroke-width="0.800"/><rect x="20" y="4.500" width="1.800" height="3.600" fill="#111"/><path d="M0.500 3.200h3.500v3H0.500zM1.300 0.500v2.700M3.200 0.500v2.700M2.250 6.200v2.500" stroke="#111" stroke-width="1" fill="#111"/></svg>
<svg style="left:1635px;top:16px" width="18" height="16" viewBox="0 0 18 16"><path d="M1 15.500A14.500 14.500 0 0 1 15.500 1" fill="none" stroke="#111" stroke-width="1.300"/><path d="M5 15.500A10.500 10.500 0 0 1 15.500 5" fill="none" stroke="#111" stroke-width="1.300"/><path d="M9 15.500A6.500 6.500 0 0 1 15.500 9" fill="none" stroke="#111" stroke-width="1.300"/><circle cx="14.800" cy="14" r="1.600" fill="#111"/></svg>
<svg style="left:1662px;top:15px" width="22" height="18" viewBox="0 0 22 18"><path d="M0.800 5.800h4L10 1v16l-5.200-4.800h-4z" fill="none" stroke="#111" stroke-width="1.300"/><path d="M12.800 6a4.500 4.500 0 0 1 0 6M15.300 3.500a8 8 0 0 1 0 11" fill="none" stroke="#111" stroke-width="1.200"/><path d="M18 1.200a11.500 11.500 0 0 1 0 15.600" fill="none" stroke="#9a9aa8" stroke-width="1.100"/></svg>
<svg style="left:1692px;top:14px" width="20" height="21" viewBox="0 0 20 21"><text x="10" y="17.500" text-anchor="middle" font-family="Noto Sans CJK SC,sans-serif" font-weight="700" font-size="19" fill="#fff" stroke="#222" stroke-width="1.100">中</text></svg>
<svg style="left:1727px;top:14px" width="22" height="20" viewBox="0 0 22 20"><path d="M3 2.500L19 0.500a2 2 0 0 1 2 1.800l1 12.500a2 2 0 0 1-1.700 2.200L5 19.500a2 2 0 0 1-2.300-1.700L0.500 5a2 2 0 0 1 2.500-2.500z" fill="#f4511e"/><text x="11" y="15.800" text-anchor="middle" font-family="Liberation Sans,sans-serif" font-weight="700" font-style="italic" font-size="16" fill="#fff">S</text></svg>
<div class="t" style="left:1757px;width:100px;text-align:center;top:2px;font-size:16px;color:#111">14:44</div>
<div class="t" style="left:1757px;width:100px;text-align:center;top:25px;font-size:16px;letter-spacing:0.300px;color:#111">2023/8/9</div>
<svg style="left:1869px;top:14px" width="31" height="31" viewBox="0 0 31 31"><path d="M0.500 0.500h19.500v14.500h-15l-4.500 4z" fill="#111"/><path d="M3.500 4h13.500M3.500 7.500h13.500M3.500 11h13.500" stroke="#dcdaee" stroke-width="1.200"/><circle cx="19.500" cy="18.500" r="9.600" fill="#e2e2e6" stroke="#555" stroke-width="0.800"/><text x="19.500" y="23.500" text-anchor="middle" font-family="Liberation Sans,sans-serif" font-weight="700" font-size="14" fill="#111">4</text></svg>
<div style="position:absolute;left:1914px;top:0;width:1px;height:49px;background:#9c9aa8"></div>

</div></div>
<!-- right strip -->
<div style="position:absolute;left:1916px;top:0;width:1px;height:1030px;background:#7d7d7d"></div>
<div style="position:absolute;left:1917px;top:0;width:3px;height:1031px;background:#dcdce6"></div>
<div style="position:absolute;left:1917px;top:0;width:3px;height:114px;background:#00d87b"></div>
<div style="position:absolute;left:1917px;top:916px;width:3px;height:114px;background:#00d87b"></div>
<div style="position:absolute;left:0;top:0;width:1px;height:1030px;background:#8b8782"></div>
<!-- sharing pill -->
<div style="position:absolute;left:885px;top:26px;width:150px;height:8px;background:#2b579a"></div>
<div style="position:absolute;left:879px;top:0;width:160px;height:29px;background:#4e5361;border-radius:0 0 7px 7px;box-shadow:0 1px 3px rgba(0,0,0,.25)">
<svg style="position:absolute;left:10px;top:7px" width="20" height="15" viewBox="0 0 20 15"><rect x="0.500" y="7" width="4.500" height="7.500" rx="1" fill="#07c160"/><rect x="7.500" y="3.500" width="4.500" height="11" rx="1" fill="#07c160"/><rect x="14.500" y="0.500" width="4.500" height="14" rx="1" fill="#07c160"/></svg>
<div class="t" style="left:42px;top:5px;color:#fff;font-size:15px">您正在共享屏幕</div>
</div>
<!-- speaking toast -->
<div style="position:absolute;left:1585px;top:83px;width:303px;height:45px;background:#2a2d31;border-radius:8px;overflow:hidden">
<svg style="position:absolute;left:14px;top:13px" width="18" height="20" viewBox="0 0 18 20"><rect x="6" y="1.500" width="6.500" height="10.500" rx="3.200" fill="#6e7176"/><path d="M3.500 8.500v1a5.700 5.700 0 0 0 11.400 0v-1M9.200 15.300v2.500M6 18.300h6.500" fill="none" stroke="#6e7176" stroke-width="1.200"/><path d="M1 18.500L17 2" stroke="#e5484d" stroke-width="1.500"/></svg>
<div style="position:absolute;left:46px;top:11px;width:1px;height:23px;background:#4a4d52"></div>
<div class="t" style="left:56px;top:12px;color:#fff;font-size:15px">正在讲话:&nbsp; 闫小军;</div>
<svg style="position:absolute;left:252px;top:9px" width="52" height="28" viewBox="0 0 52 28"><defs><linearGradient id="wm" x1="0" y1="0" x2="1" y2="1"><stop offset="0" stop-color="#5a5d62"/><stop offset="1" stop-color="#33363a"/></linearGradient></defs><path d="M2 14L16 1l9 9L34 1l16 14-5 9-10-9-10 10-10-10-8 9z" fill="url(#wm)"/></svg>
</div>
<!-- chat widget -->
<div style="position:absolute;left:15px;top:858px;width:181px;height:37px;background:#646568;border-radius:5px">
<svg style="position:absolute;left:12px;top:8px" width="21" height="21" viewBox="0 0 21 21"><circle cx="10.500" cy="10.500" r="10.200" fill="#fff"/><circle cx="7" cy="7.500" r="1.500" fill="#646568"/><circle cx="14" cy="7.500" r="1.500" fill="#646568"/><path d="M4 11h13a6.500 6.500 0 0 1-13 0z" fill="#646568"/></svg>
<div style="position:absolute;left:43px;top:6px;width:1px;height:25px;background:#7e7f82"></div>
<div class="t" style="left:53px;top:10px;color:#c3c4c6;font-size:15px">说点什么...</div>
<div style="position:absolute;left:143px;top:6px;width:1px;height:25px;background:#7e7f82"></div>
<svg style="position:absolute;left:157px;top:13px" width="8" height="12" viewBox="0 0 8 12"><path d="M6.500 0.800L1.300 6l5.200 5.200" fill="none" stroke="#fff" stroke-width="1.400"/></svg>
</div>

</body>
</html>
